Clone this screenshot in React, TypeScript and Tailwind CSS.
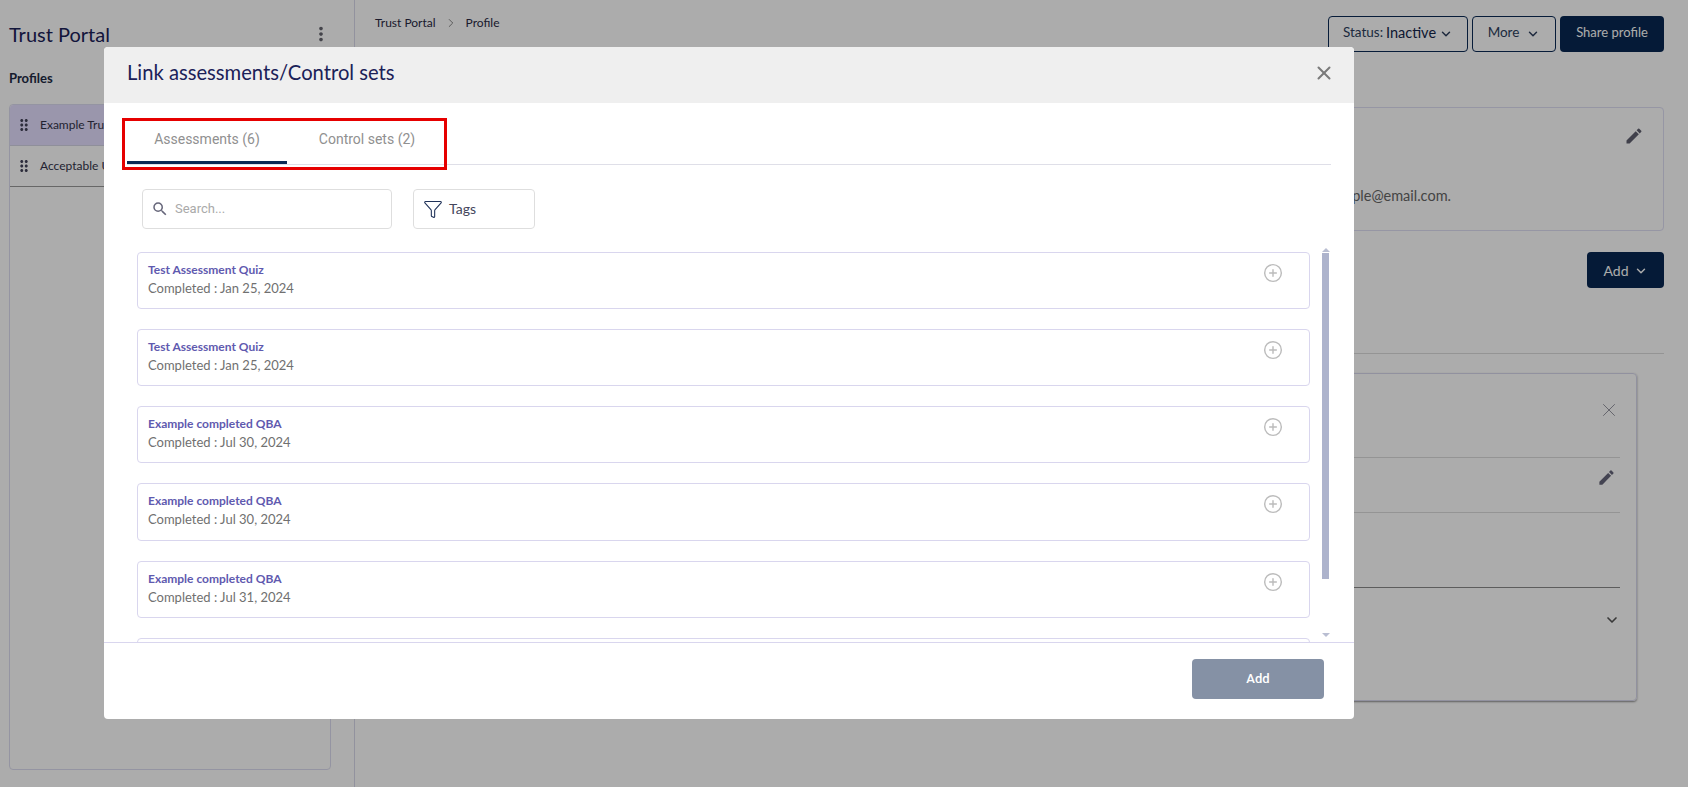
import { ChevronDown, ChevronRight, CirclePlus, Funnel, X } from "lucide-react";
import { MdDragIndicator, MdEdit, MdMoreVert, MdSearch } from "react-icons/md";

const assessments = [
  { title: "Test Assessment Quiz", date: "Jan 25, 2024" },
  { title: "Test Assessment Quiz", date: "Jan 25, 2024" },
  { title: "Example completed QBA", date: "Jul 30, 2024" },
  { title: "Example completed QBA", date: "Jul 30, 2024" },
  { title: "Example completed QBA", date: "Jul 31, 2024" },
];

function Sidebar() {
  return (
    <aside className="w-[355px] shrink-0 border-r border-[#d9d9ea] px-[9px] flex flex-col h-full">
      <div className="flex items-center justify-between pt-[11px] pr-[1px] h-[57px]">
        <h1 className="text-[20px] leading-[26px] text-[#1b2158]">Trust Portal</h1>
        <MdMoreVert className="w-[22px] h-[22px] text-[#66666f] mr-[12px]" />
      </div>
      <p className="mt-[12px] text-[13px] leading-[18px] font-bold text-[#222a44]">Profiles</p>
      <div className="mt-[17px] w-[322px] flex-1 mb-[17px] border border-[#dcdcf0] rounded">
        <div className="h-[41px] flex items-center bg-[#e5deff] rounded-t border-b border-[#d5d5e5] pl-[5px]">
          <MdDragIndicator className="w-[18px] h-[18px] text-[#44445a]" />
          <span className="ml-[7px] text-[12px] text-[#33334a] whitespace-nowrap">Example Trust Profile</span>
        </div>
        <div className="h-[41px] flex items-center border-b border-[#999] pl-[5px]">
          <MdDragIndicator className="w-[18px] h-[18px] text-[#44445a]" />
          <span className="ml-[7px] text-[12px] text-[#33334a] whitespace-nowrap">Acceptable Use Policy</span>
        </div>
      </div>
    </aside>
  );
}

function MainContent() {
  return (
    <main className="flex-1 pl-[20px] pr-[24px] min-w-0">
      <div className="flex justify-between pt-[16px]">
        <div className="flex items-center h-[14px] text-[12px] text-[#2a2a44] gap-[8px]">
          <span>Trust Portal</span>
          <ChevronRight className="w-[14px] h-[14px] text-[#555]" strokeWidth={1.2} />
          <span>Profile</span>
        </div>
        <div className="flex gap-[4px] text-[13.5px]">
          <button className="w-[140px] h-[36px] pb-[3px] rounded border border-[#0b2a55] text-[#2c3e5c] flex items-center justify-center gap-[3px]">
            Status: <span className="text-[14.5px] text-[#14264a]">Inactive</span>
            <ChevronDown className="w-[14px] h-[14px] mt-[3px]" strokeWidth={2.5} />
          </button>
          <button className="w-[84px] h-[36px] pb-[3px] rounded border border-[#0b2a55] text-[#2c3e5c] flex items-center justify-center gap-[7px]">
            More
            <ChevronDown className="w-[14px] h-[14px] mt-[3px]" strokeWidth={2.5} />
          </button>
          <button className="w-[104px] h-[36px] pb-[3px] rounded bg-[#082752] text-white text-[13px]">Share profile</button>
        </div>
      </div>

      <section className="relative mt-[55px] h-[124px] border border-[#dedef4] rounded pt-[77px] text-right pr-[212px] text-[14.5px] text-[#666]">
        Contact us at example@email.com.
        <MdEdit className="absolute right-[19px] top-[18px] w-[20px] h-[20px] text-[#606070]" />
      </section>

      <div className="flex justify-end mt-[21px]">
        <button className="w-[77px] h-[36px] rounded bg-[#082752] text-white text-[14px] flex items-center justify-center gap-[5px]">
          Add
          <ChevronDown className="w-[14px] h-[14px] mt-[1px]" strokeWidth={2.5} />
        </button>
      </div>

      <div className="mt-[65px] border-t border-[#dcdcdc]" />

      <section className="mt-[19px] mr-[27px] h-[328px] border border-[#d8d8ec] rounded shadow-[0_1px_2px_rgba(0,0,0,0.45)] px-[16px]">
        <div className="h-[84px] border-b border-[#dcdcdc] flex justify-end pt-[25px]">
          <X className="w-[22px] h-[22px] text-[#8d8d99]" strokeWidth={1} />
        </div>
        <div className="h-[55px] border-b border-[#dcdcdc] flex justify-end pt-[10px] pr-[4px]">
          <MdEdit className="w-[19px] h-[19px] text-[#66667a]" />
        </div>
        <div className="h-[75px] border-b border-[#8a8a8a]" />
        <div className="flex justify-end pt-[24px]">
          <ChevronDown className="w-[16px] h-[16px] text-[#555]" strokeWidth={2.5} />
        </div>
      </section>
    </main>
  );
}

function AssessmentCard({ title, date }: { title: string; date: string }) {
  return (
    <div className="h-[57.15px] mb-[20px] shrink-0 border border-[#d9d6ee] rounded-[4px] pl-[10px] pr-[26px] flex justify-between">
      <div>
        <p className="mt-[9px] text-[12px] leading-[16px] font-bold text-[#5f5aaf]">{title}</p>
        <p className="mt-[1px] text-[13px] leading-[18px] text-[#707070]">Completed : {date}</p>
      </div>
      <CirclePlus className="mt-[10px] w-[20px] h-[20px] text-[#bcbcbc]" strokeWidth={1.7} />
    </div>
  );
}

function LinkModal() {
  return (
    <div className="w-[1250px] h-[672px] bg-white rounded-[4px] flex flex-col overflow-hidden">
      <header className="h-[56px] shrink-0 bg-[#efefef] flex items-center justify-between pl-[23px] pr-[19px] pb-[4px]">
        <h2 className="text-[20.2px] mb-[2px] text-[#1b2158]">Link assessments/Control sets</h2>
        <X className="w-[22px] h-[22px] text-[#7a7a7a]" strokeWidth={2.2} />
      </header>

      <div className="relative flex-1 min-h-0 flex flex-col pl-[23px] pr-[23px]">
        <div className="h-[62px] shrink-0 flex border-b border-[#dfdfe8] font-['Roboto',sans-serif] text-[14px] text-[#909090]">
          <div className="w-[160px] h-[61px] border-b-[3px] border-[#0b2a55] flex justify-center pt-[26px]">
            Assessments (6)
          </div>
          <div className="w-[160px] flex justify-center pt-[26px]">Control sets (2)</div>
        </div>

        {/* highlight drawn over the tabs in the source screenshot */}
        <div className="absolute left-[18px] top-[15px] w-[325px] h-[52px] border-[3px] border-[#e60000]" />

        <div className="mt-[24px] ml-[15px] flex gap-[21px] shrink-0">
          <div className="w-[250px] h-[40px] border border-[#dedede] rounded-[4px] flex items-center pl-[8px] font-['Roboto',sans-serif] text-[13px] text-[#aaaaaa]">
            <MdSearch className="w-[18px] h-[18px] text-[#66667a]" />
            <span className="ml-[6px]">Search...</span>
          </div>
          <div className="w-[122px] h-[40px] border border-[#dedede] rounded-[4px] flex items-center pl-[9px] text-[14px] text-[#44465c]">
            <Funnel className="w-[20px] h-[20px] text-[#1f3158]" strokeWidth={1.3} />
            <span className="ml-[6px] mb-[1px]">Tags</span>
          </div>
        </div>

        <div className="mt-[18px] flex-1 min-h-0 flex overflow-hidden">
          <div className="ml-[10px] w-[1173px] shrink-0 mt-[5px] flex flex-col">
            {assessments.map((item, i) => (
              <AssessmentCard key={i} title={item.title} date={item.date} />
            ))}
            {/* next card only peeks out above the footer */}
            <div className="h-[57.15px] shrink-0 border border-[#d9d6ee] rounded-[4px]" />
          </div>
          <div className="ml-[12px] w-[7px] shrink-0 flex flex-col items-center">
            <div className="mt-[1px] w-0 h-0 border-x-[4px] border-x-transparent border-b-[4px] border-b-[#b9bed2]" />
            <div className="mt-[1px] w-[7px] h-[326px] bg-[#adb3cc]" />
            <div className="mt-[54px] w-0 h-0 border-x-[4px] border-x-transparent border-t-[4px] border-t-[#b9bed2]" />
          </div>
        </div>
      </div>

      <footer className="h-[77px] shrink-0 border-t border-[#d9d6ee] flex justify-end pt-[16px] pr-[30px]">
        <button className="w-[132px] h-[40px] rounded-[4px] bg-[#8591a5] text-white text-[13px] font-medium font-['Roboto',sans-serif]">
          Add
        </button>
      </footer>
    </div>
  );
}

export default function App() {
  return (
    <div className="relative w-full h-[787px] overflow-hidden bg-white flex font-['Lato',sans-serif]">
      <Sidebar />
      <MainContent />
      <div className="absolute inset-0 bg-[rgba(0,0,0,0.325)] pl-[104px] pt-[47px]">
        <LinkModal />
      </div>
    </div>
  );
}
